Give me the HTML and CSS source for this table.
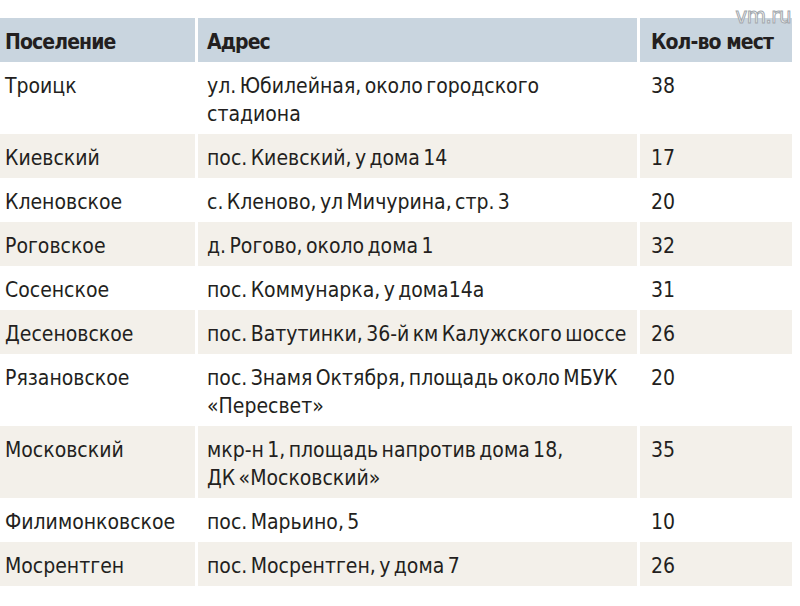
FILE: index.html
```html
<!DOCTYPE html>
<html lang="ru">
<head>
<meta charset="utf-8">
<link rel="stylesheet" href="styles.css">
</head>
<body>
<div class="page">
  <div class="mark">vm.ru</div>
  <div class="table">
    <div class="row head"><div class="c1">Поселение</div><div class="c2">Адрес</div><div class="c3">Кол-во мест</div></div>
    <div class="row"><div class="c1">Троицк</div><div class="c2">ул. Юбилейная, около городского<br>стадиона</div><div class="c3">38</div></div>
    <div class="row alt"><div class="c1">Киевский</div><div class="c2">пос. Киевский, у дома 14</div><div class="c3">17</div></div>
    <div class="row"><div class="c1">Кленовское</div><div class="c2">с. Кленово, ул Мичурина, стр. 3</div><div class="c3">20</div></div>
    <div class="row alt"><div class="c1">Роговское</div><div class="c2">д. Рогово, около дома 1</div><div class="c3">32</div></div>
    <div class="row"><div class="c1">Сосенское</div><div class="c2">пос. Коммунарка, у дома14а</div><div class="c3">31</div></div>
    <div class="row alt"><div class="c1">Десеновское</div><div class="c2">пос. Ватутинки, 36-й км Калужского шоссе</div><div class="c3">26</div></div>
    <div class="row"><div class="c1">Рязановское</div><div class="c2">пос. Знамя Октября, площадь около МБУК<br>«Пересвет»</div><div class="c3">20</div></div>
    <div class="row alt"><div class="c1">Московский</div><div class="c2">мкр-н 1, площадь напротив дома 18,<br>ДК «Московский»</div><div class="c3">35</div></div>
    <div class="row"><div class="c1">Филимонковское</div><div class="c2">пос. Марьино, 5</div><div class="c3">10</div></div>
    <div class="row alt"><div class="c1">Мосрентген</div><div class="c2">пос. Мосрентген, у дома 7</div><div class="c3">26</div></div>
  </div>
</div>
</body>
</html>
```
FILE: styles.css
```css
html, body {
  margin: 0;
  padding: 0;
  background: #ffffff;
}
.page {
  position: relative;
  width: 800px;
  height: 606px;
  padding-top: 18px;
  box-sizing: border-box;
  font-family: "DejaVu Sans Condensed", "DejaVu Sans", sans-serif;
  font-stretch: condensed;
  font-size: 21px;
  color: #231f20;
  word-spacing: -2.6px;
}
.table {
  display: flex;
  flex-direction: column;
  width: 792px;
}
.row {
  display: grid;
  grid-template-columns: 195px 439px 152px;
  column-gap: 3px;
}
.row > div {
  padding: 10px 0 6px;
  line-height: 28px;
  white-space: nowrap;
}
.c1 { padding-left: 5px !important; }
.c2 { padding-left: 9px !important; }
.c3 { padding-left: 11px !important; }
.head > div {
  background: #c9d5df;
  font-weight: bold;
  letter-spacing: -0.9px;
  word-spacing: 0;
}
.alt > div {
  background: #f3f0ea;
}
.mark {
  position: absolute;
  top: 3px;
  right: 9px;
  font-family: "DejaVu Sans", sans-serif;
  font-size: 22px;
  color: #ffffff;
  -webkit-text-stroke: 1px #a3a8ad;
  letter-spacing: -0.5px;
  word-spacing: 0;
}
```
